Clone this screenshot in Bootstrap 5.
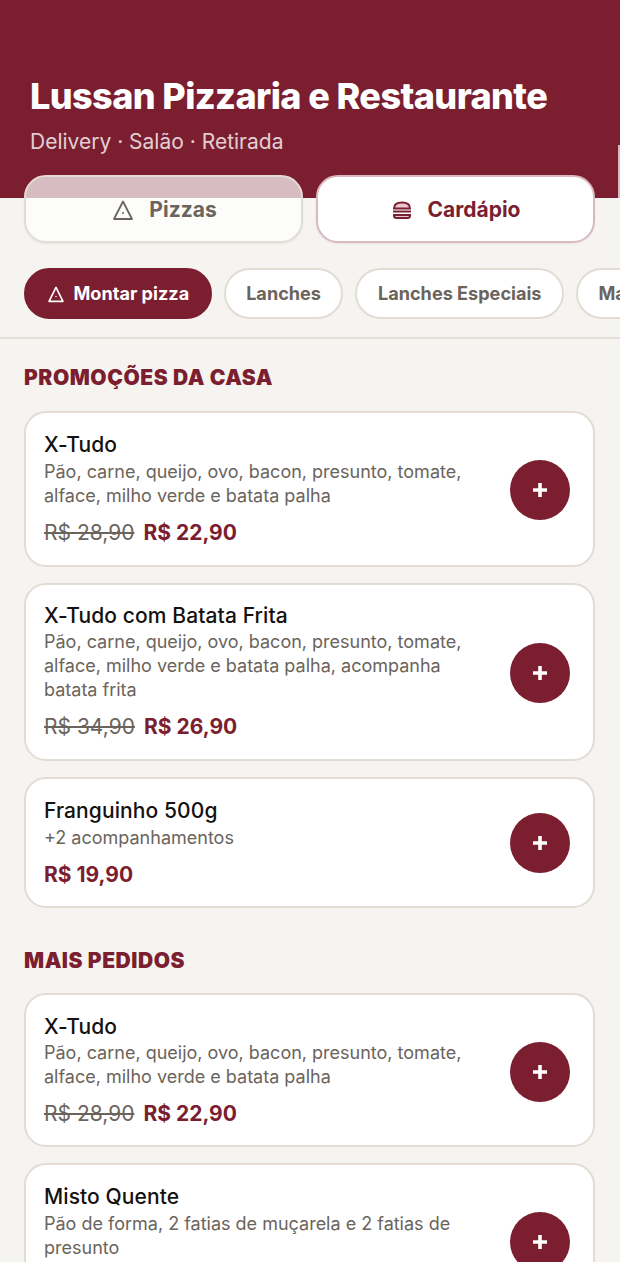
<!DOCTYPE html>
<html lang="pt-BR">
<head>
    <meta charset="UTF-8">
    <title>Lussan Pizzaria e Restaurante</title>
    <link href="https://cdn.jsdelivr.net/npm/bootstrap@5.3.0/dist/css/bootstrap.min.css" rel="stylesheet">
    <style>
        html, body { height: 100%; overflow: hidden; }
        body { background: #f6f4f1; font-family: Inter, "Liberation Sans", sans-serif; color: #14110f; }
        .hero { position: relative; background: #7b1e30; height: 198px; padding: 76px 30px 0; color: #fff; }
        .hero::after { content: ""; position: absolute; right: 0; top: 145px; bottom: 0; width: 2px; background: #d9b9bf; }
        .hero h1 { font-size: 36px; line-height: 40px; font-weight: 800; letter-spacing: -0.59px; margin: 0; white-space: nowrap; }
        .hero p { font-size: 21px; line-height: 28px; margin: 12px 0 0; color: rgba(255,255,255,.8); }
        .tabs { position: relative; z-index: 1; margin: -23px 25px 0 24px; gap: 13px; }
        .tab-btn { flex: 1 1 0; height: 68px; padding: 2px 0 0 2px; border-radius: 22px; border: 2px solid #e2dcd4; background: rgba(255,255,255,.7); color: #6b645c; font-size: 21px; font-weight: 700; gap: 15px; box-shadow: 0 1px 2px rgba(60,40,30,.08); }
        .tab-btn.on { background: #fff; color: #7b1e30; border-color: #d9b9bf; }
        .chips { margin: 25px 0 0 24px; gap: 12px; height: 51px; overflow: hidden; }
        .chip { flex: none; height: 51px; border-radius: 26px; border: 2px solid #e2dcd4; background: #fff; color: #6b645c; font-size: 18.1px; font-weight: 700; padding: 0 20.5px; gap: 9px; }
        .chip.on { background: #7b1e30; border-color: #7b1e30; color: #fff; }
        .rule { height: 2px; background: #e2dfd9; margin-top: 18px; }
        .sec-first { margin-top: 25px; }
        .sec-first .sec-title { margin-bottom: 19px; }
        .sec-next { margin-top: 39px; }
        .sec-title { font-size: 21px; line-height: 28px; font-weight: 900; color: #7b1e30; margin: 0 0 18px 24px; letter-spacing: .55px; }
        .menu-card { margin: 0 25px 16px 24px; background: #fff; border: 2px solid #e2dcd4; border-radius: 22px; padding: 17px 18px 16px; gap: 20px; }
        .item-name { font-size: 21px; line-height: 30px; font-weight: 500; letter-spacing: .1px; margin: 0; }
        .item-desc { font-size: 18px; line-height: 24px; color: #6b645c; margin: 0; }
        .price-row { margin-top: 9px; line-height: 32px; gap: 9px; }
        .old-price { font-size: 21px; color: #6b645c; text-decoration: line-through; }
        .new-price { font-size: 21px; font-weight: 700; color: #7b1e30; }
        .add-btn { flex: none; width: 60px; height: 60px; border-radius: 50%; border: 0; padding: 0; background: #7b1e30; margin-right: 5px; }
        /* the reference's rows differ by a pixel or two */
        .card-long { padding-top: 17px; padding-bottom: 16px; }
        .card-long .item-name { line-height: 28px; }
        .card-short { padding-top: 16px; padding-bottom: 15px; }
        .card-short .item-name { line-height: 31px; }
        .card-repeat { padding-top: 18px; padding-bottom: 15px; }
        .card-repeat .item-name { line-height: 28px; }
    </style>
</head>
<body>
<header class="hero">
    <h1>Lussan Pizzaria e Restaurante</h1>
    <p>Delivery · Salão · Retirada</p>
</header>

<div class="tabs d-flex">
    <button class="tab-btn d-flex align-items-center justify-content-center">
        <svg width="22" height="22" viewBox="0 0 22 22" fill="none" stroke="currentColor" stroke-width="1.8"><path d="M11 2.500 L2 20 H20 Z" stroke-linejoin="round"/><circle cx="11" cy="14" r="1" fill="currentColor" stroke="none"/></svg>
        Pizzas
    </button>
    <button class="tab-btn on d-flex align-items-center justify-content-center">
        <svg width="20" height="20" viewBox="0 0 20 20" fill="none" stroke="currentColor" stroke-width="2"><path d="M2 8.500C2 4.500 5.500 2.500 10 2.500s8 2 8 6z" fill="#e8c9cf"/><path d="M1 11.500h18"/><path d="M2 15h16v.5c0 1.500-1 2.500-2.500 2.500h-11C3 18 2 17 2 15.500z" fill="#e8c9cf"/></svg>
        Cardápio
    </button>
</div>

<nav class="chips d-flex">
    <button class="chip on d-flex align-items-center">
        <svg width="18" height="18" viewBox="0 0 22 22" fill="none" stroke="currentColor" stroke-width="2"><path d="M11 3 L2.500 20 H19.500 Z" stroke-linejoin="round"/><circle cx="11" cy="14" r=".9" fill="currentColor" stroke="none"/></svg>
        Montar pizza
    </button>
    <button class="chip">Lanches</button>
    <button class="chip">Lanches Especiais</button>
    <button class="chip">Massas</button>
</nav>
<div class="rule"></div>

<section class="sec-first">
    <h2 class="sec-title">PROMOÇÕES DA CASA</h2>

    <div class="menu-card d-flex align-items-center">
        <div class="flex-grow-1">
            <h3 class="item-name">X-Tudo</h3>
            <p class="item-desc">Pão, carne, queijo, ovo, bacon, presunto, tomate, alface, milho verde e batata palha</p>
            <div class="price-row d-flex"><span class="old-price">R$ 28,90</span><span class="new-price">R$ 22,90</span></div>
        </div>
        <button class="add-btn d-flex align-items-center justify-content-center"><svg width="16" height="16" viewBox="0 0 16 16"><path d="M6.200 1h3.600v5.200H15v3.600H9.800V15H6.200V9.800H1V6.200h5.200z" fill="#fff"/></svg></button>
    </div>

    <div class="menu-card card-long d-flex align-items-center">
        <div class="flex-grow-1">
            <h3 class="item-name">X-Tudo com Batata Frita</h3>
            <p class="item-desc">Pão, carne, queijo, ovo, bacon, presunto, tomate, alface, milho verde e batata palha, acompanha batata frita</p>
            <div class="price-row d-flex"><span class="old-price">R$ 34,90</span><span class="new-price">R$ 26,90</span></div>
        </div>
        <button class="add-btn d-flex align-items-center justify-content-center"><svg width="16" height="16" viewBox="0 0 16 16"><path d="M6.200 1h3.600v5.200H15v3.600H9.800V15H6.200V9.800H1V6.200h5.200z" fill="#fff"/></svg></button>
    </div>

    <div class="menu-card card-short d-flex align-items-center">
        <div class="flex-grow-1">
            <h3 class="item-name">Franguinho 500g</h3>
            <p class="item-desc">+2 acompanhamentos</p>
            <div class="price-row d-flex"><span class="new-price">R$ 19,90</span></div>
        </div>
        <button class="add-btn d-flex align-items-center justify-content-center"><svg width="16" height="16" viewBox="0 0 16 16"><path d="M6.200 1h3.600v5.200H15v3.600H9.800V15H6.200V9.800H1V6.200h5.200z" fill="#fff"/></svg></button>
    </div>
</section>

<section class="sec-next">
    <h2 class="sec-title">MAIS PEDIDOS</h2>

    <div class="menu-card card-repeat d-flex align-items-center">
        <div class="flex-grow-1">
            <h3 class="item-name">X-Tudo</h3>
            <p class="item-desc">Pão, carne, queijo, ovo, bacon, presunto, tomate, alface, milho verde e batata palha</p>
            <div class="price-row d-flex"><span class="old-price">R$ 28,90</span><span class="new-price">R$ 22,90</span></div>
        </div>
        <button class="add-btn d-flex align-items-center justify-content-center"><svg width="16" height="16" viewBox="0 0 16 16"><path d="M6.200 1h3.600v5.200H15v3.600H9.800V15H6.200V9.800H1V6.200h5.200z" fill="#fff"/></svg></button>
    </div>

    <div class="menu-card d-flex align-items-center">
        <div class="flex-grow-1">
            <h3 class="item-name">Misto Quente</h3>
            <p class="item-desc">Pão de forma, 2 fatias de muçarela e 2 fatias de presunto</p>
            <div class="price-row d-flex"><span class="new-price">R$ 12,90</span></div>
        </div>
        <button class="add-btn d-flex align-items-center justify-content-center"><svg width="16" height="16" viewBox="0 0 16 16"><path d="M6.200 1h3.600v5.200H15v3.600H9.800V15H6.200V9.800H1V6.200h5.200z" fill="#fff"/></svg></button>
    </div>
</section>
</body>
</html>
